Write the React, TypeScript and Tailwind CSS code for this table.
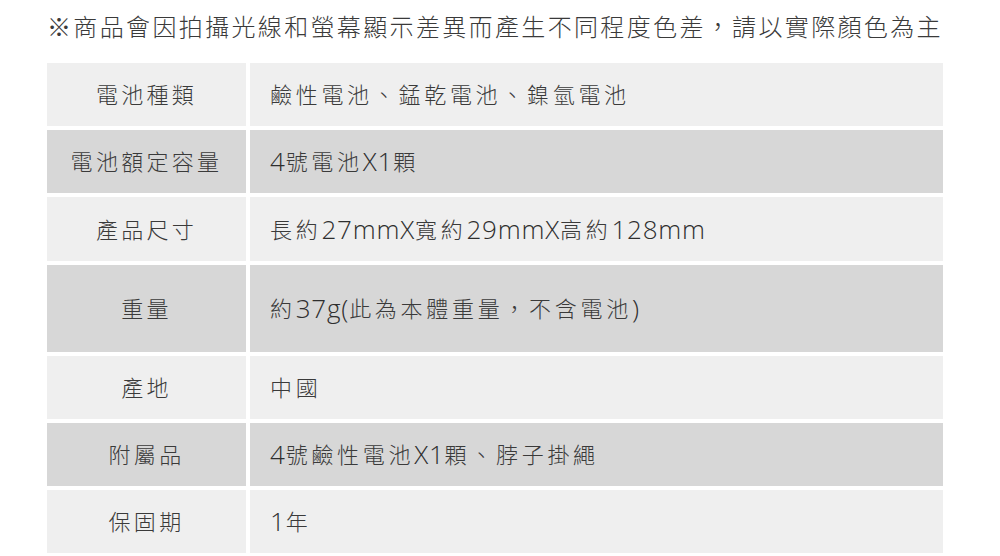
const specs: Array<{ label: string; value: string; h: string }> = [
  { label: '電池種類', value: '鹼性電池、錳乾電池、鎳氫電池', h: 'h-[63px]' },
  { label: '電池額定容量', value: '4號電池X1顆', h: 'h-[63px]' },
  { label: '產品尺寸', value: '長約27mmX寬約29mmX高約128mm', h: 'h-[64px]' },
  { label: '重量', value: '約37g(此為本體重量，不含電池)', h: 'h-[87px]' },
  { label: '產地', value: '中國', h: 'h-[63px]' },
  { label: '附屬品', value: '4號鹼性電池X1顆、脖子掛繩', h: 'h-[63px]' },
  { label: '保固期', value: '1年', h: 'h-[63px]' },
  { label: '', value: '', h: 'h-[63px]' },
]

// latin runs sit a bit larger and without the wide CJK tracking
function Mixed({ text }: { text: string }) {
  const parts = text.match(/[\x20-\x7e]+|[^\x20-\x7e]+/g) ?? []
  return (
    <>
      {parts.map((p, i) =>
        /^[\x20-\x7e]+$/.test(p) ? (
          <span key={i} className="text-[26px] tracking-[0.8px] text-[#2e2e2e]">
            {p}
          </span>
        ) : (
          <span key={i}>{p}</span>
        )
      )}
    </>
  )
}

export default function App() {
  return (
    <div
      lang="zh-Hant-TW"
      className="w-[1000px] h-[556px] overflow-hidden bg-white text-[#3a3a3a] font-light font-['Open_Sans','Noto_Sans_CJK_TC',sans-serif]"
    >
      <p className="pl-[47px] pt-[9px] h-[63px] text-[24px] leading-[36px] tracking-[2.35px] whitespace-nowrap">
        ※商品會因拍攝光線和螢幕顯示差異而產生不同程度色差，請以實際顏色為主
      </p>

      <div className="ml-[47px] w-[896px] grid grid-cols-[199px_693px] gap-[4px]">
        {specs.map((row, i) => {
          const bg = i % 2 === 0 ? 'bg-[#efefef]' : 'bg-[#d7d7d7]'
          return (
            <div key={i} className="contents">
              <div className={`${row.h} ${bg} flex items-center justify-center text-[22px] tracking-[3.3px] whitespace-nowrap`}>
                {row.label}
              </div>
              <div className={`${row.h} ${bg} flex items-center pl-[20px] text-[22px] tracking-[3.7px] whitespace-nowrap`}>
                <Mixed text={row.value} />
              </div>
            </div>
          )
        })}
      </div>
    </div>
  )
}
